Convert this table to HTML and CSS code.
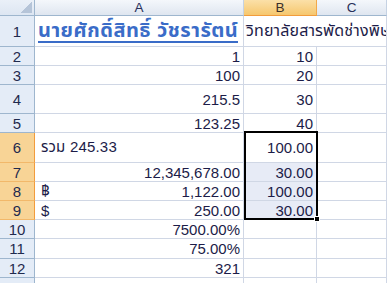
FILE: index.html
```html
<!DOCTYPE html>
<html>
<head>
<meta charset="utf-8">
<link rel="stylesheet" href="styles.css">
</head>
<body>
<div class="wrap">
  <div class="sheet">
    <div class="corner"><span class="tri"></span></div>
    <div class="colh">A</div>
    <div class="colh sel">B</div>
    <div class="colh">C</div>

    <div class="rowh r1">1</div>
    <div class="cell title"><span>นายศักดิ์สิทธิ์ วัชรารัตน์</span></div>
    <div class="cell over">วิทยาลัยสารพัดช่างพิษณุโลก</div>
    <div class="cell clear"></div>

    <div class="rowh">2</div>
    <div class="cell num">1</div>
    <div class="cell num">10</div>
    <div class="cell"></div>

    <div class="rowh">3</div>
    <div class="cell num">100</div>
    <div class="cell num">20</div>
    <div class="cell"></div>

    <div class="rowh">4</div>
    <div class="cell num">215.5</div>
    <div class="cell num">30</div>
    <div class="cell"></div>

    <div class="rowh">5</div>
    <div class="cell num">123.25</div>
    <div class="cell num">40</div>
    <div class="cell"></div>

    <div class="rowh sel">6</div>
    <div class="cell left">รวม 245.33</div>
    <div class="cell num">100.00</div>
    <div class="cell"></div>

    <div class="rowh sel">7</div>
    <div class="cell num">12,345,678.00</div>
    <div class="cell num shade">30.00</div>
    <div class="cell"></div>

    <div class="rowh sel">8</div>
    <div class="cell split"><span>฿</span><span>1,122.00</span></div>
    <div class="cell num shade">100.00</div>
    <div class="cell"></div>

    <div class="rowh sel">9</div>
    <div class="cell split"><span>$</span><span>250.00</span></div>
    <div class="cell num shade">30.00</div>
    <div class="cell"></div>

    <div class="rowh">10</div>
    <div class="cell num">7500.00%</div>
    <div class="cell"></div>
    <div class="cell"></div>

    <div class="rowh">11</div>
    <div class="cell num">75.00%</div>
    <div class="cell"></div>
    <div class="cell"></div>

    <div class="rowh">12</div>
    <div class="cell num">321</div>
    <div class="cell"></div>
    <div class="cell"></div>

    <div class="rowh">13</div>
    <div class="cell"></div>
    <div class="cell"></div>
    <div class="cell"></div>
  </div>
  <div class="selbox"></div>
  <div class="handle"></div>
</div>
</body>
</html>
```

FILE: styles.css
```css
* { box-sizing: border-box; }
html, body { margin: 0; padding: 0; background: #fff; overflow: hidden; }
body { width: 387px; height: 283px; }
.wrap { position: relative; width: 387px; height: 283px; overflow: hidden; }
.sheet {
  display: grid;
  grid-template-columns: 35px 209px 73px 1fr;
  grid-template-rows: 16px 31px 19px 19px 29px 19px 30px 19px 19px 19px 19px 20px 19px 19px;
  font-family: "Liberation Sans", "Noto Sans Thai", "DejaVu Sans", sans-serif;
  font-size: 15px;
  color: #1c1c48;
}
.corner {
  position: relative;
  background: linear-gradient(#eaf0f8, #dde6f2);
  border-right: 1px solid #9eb6ce;
  border-bottom: 1px solid #9eb6ce;
}
.tri {
  position: absolute; right: 2px; bottom: 2px; width: 11px; height: 11px;
  background: linear-gradient(135deg, transparent 50%, #b5c4d8 50%);
}
.colh {
  display: flex; align-items: center; justify-content: center;
  background: linear-gradient(#f4f7fb, #dfe6f0);
  border-right: 1px solid #c5d2e3;
  border-bottom: 1px solid #9eb6ce;
  font-size: 13.5px; color: #27305a;
}
.colh.sel {
  background: linear-gradient(#fbe0a8, #f6c76e);
  border-right: 1px solid #f2a94a;
  border-bottom: 1px solid #f29c3c;
  color: #3c2f2a;
}
.rowh {
  display: flex; align-items: center; justify-content: center;
  background: #e4ecf7;
  border-right: 1px solid #9eb6ce;
  border-bottom: 1px solid #9eb6ce;
  font-size: 15px; color: #1f2a4e;
}
.rowh.sel {
  background: #f8d496;
  border-right: 1px solid #f29c3c;
  border-bottom: 1px solid #f2b86a;
}
.cell {
  display: flex; align-items: center;
  padding: 0 3px 0 3px;
  background: #fff;
  border-right: 1px solid #d0d7e5;
  border-bottom: 1px solid #d0d7e5;
  white-space: nowrap;
}
.num { justify-content: flex-end; }
.split { justify-content: space-between; padding-left: 6px; }
.left { padding-left: 6px; letter-spacing: 0.2px; }
.shade { background: #e7ebf6; }
.title {
  font-size: 20px; color: #3a6cc8; font-weight: bold;
  overflow: hidden; letter-spacing: 0.5px;
}
.title span { border-bottom: 2px solid #3a6cc8; line-height: 22px; }
.over {
  border-right: none; overflow: visible; font-size: 16px;
  letter-spacing: 0.15px; padding-left: 2px;
}
.clear { background: transparent; }
.selbox {
  position: absolute; left: 244px; top: 131px; width: 74px; height: 89px;
  border: 2px solid #000;
}
.handle {
  position: absolute; left: 314px; top: 216px; width: 6px; height: 6px;
  background: #000; border: 1px solid #fff;
}
```
